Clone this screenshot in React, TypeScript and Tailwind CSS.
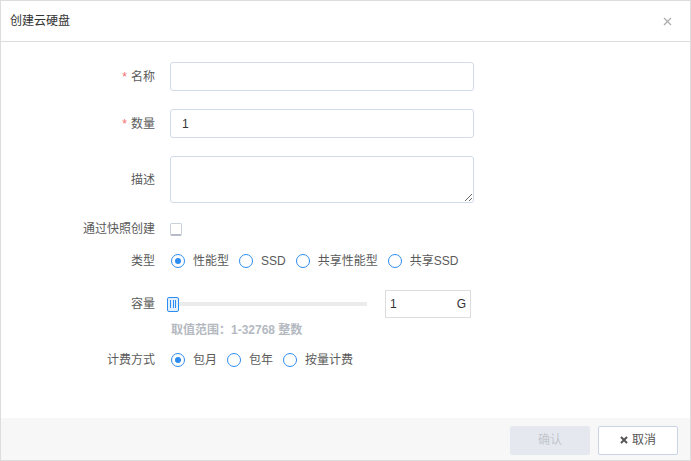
import React from 'react'

const font = { fontFamily: '"Liberation Sans", "Noto Sans CJK SC", sans-serif' }

function Label({ text, required }: { text: string; required?: boolean }) {
  return (
    <div className="w-[154px] shrink-0 text-right text-[12px] text-[#5a5a5a]">
      {required && <span className="mr-[4px] text-[#f56c6c]">*</span>}
      {text}
    </div>
  )
}

function Radio({ label, checked }: { label: string; checked?: boolean }) {
  return (
    <label className="flex items-center mr-[10px] cursor-pointer">
      <span className="flex h-[14px] w-[14px] items-center justify-center rounded-full border border-[#2d8cf0] bg-white">
        {checked && <span className="h-[6px] w-[6px] rounded-full bg-[#2d8cf0]" />}
      </span>
      <span className="ml-[8px] text-[12px] text-[#5a5a5a]">{label}</span>
    </label>
  )
}

export default function App() {
  return (
    <div className="flex h-[461px] w-[691px] flex-col border border-[#ddd] bg-white" style={font}>
      {/* 标题栏 */}
      <div className="flex h-[41px] shrink-0 items-center justify-between border-b border-[#ddd] pl-[9px] pr-[18px]">
        <span className="text-[12px] text-[#333]">创建云硬盘</span>
        <svg width="9" height="9" viewBox="0 0 9 9" className="mt-[1px]">
          <path d="M1 1L8 8M8 1L1 8" stroke="#aaa" strokeWidth="1.2" />
        </svg>
      </div>

      {/* 表单 */}
      <div className="flex-1 pt-[20px]">
        <div className="flex items-center">
          <Label text="名称" required />
          <input className="ml-[15px] h-[29px] w-[304px] rounded-[3px] border border-[#cfdbe9] px-[11px] text-[12px] text-[#333] outline-none" />
        </div>

        <div className="mt-[18px] flex items-center">
          <Label text="数量" required />
          <input
            defaultValue="1"
            className="ml-[15px] h-[29px] w-[304px] rounded-[3px] border border-[#cfdbe9] px-[11px] text-[12px] text-[#333] outline-none"
          />
        </div>

        <div className="mt-[18px] flex items-center">
          <Label text="描述" />
          <textarea className="ml-[15px] h-[47px] w-[304px] rounded-[3px] border border-[#cfdbe9] px-[11px] py-[4px] text-[12px] text-[#333] outline-none" />
        </div>

        <div className="mt-[16px] flex h-[20px] items-center">
          <Label text="通过快照创建" />
          <span className="ml-[15px] h-[13px] w-[12px] rounded-[2px] border border-[#c8d0da] border-b-[2px] border-b-[#b5bcc6] bg-white" />
        </div>

        <div className="mt-[12px] flex h-[20px] items-center">
          <Label text="类型" />
          <div className="ml-[16px] flex items-center">
            <Radio label="性能型" checked />
            <Radio label="SSD" />
            <Radio label="共享性能型" />
            <Radio label="共享SSD" />
          </div>
        </div>

        <div className="mt-[19px] flex h-[28px] items-center">
          <Label text="容量" />
          <div className="ml-[12px] flex w-[200px] items-center">
            <span className="flex h-[15px] w-[12px] shrink-0 items-center justify-center gap-[1.5px] rounded-[2px] border border-[#2d8cf0] bg-[#e1efff]">
              <span className="h-[8px] w-[1px] bg-[#2d8cf0]" />
              <span className="h-[8px] w-[1px] bg-[#2d8cf0]" />
              <span className="h-[8px] w-[1px] bg-[#2d8cf0]" />
            </span>
            <span className="h-[4px] flex-1 bg-[#ebebeb]" />
          </div>
          <div className="ml-[18px] flex h-[28px] w-[86px] items-center justify-between border border-[#ddd] px-[4px] text-[12px] text-[#333]">
            <span>1</span>
            <span>G</span>
          </div>
        </div>

        <div className="mt-[4px] ml-[170px] text-[12px] font-bold leading-[16px] text-[#b4b9c1]">
          取值范围：1-32768 整数
        </div>

        <div className="mt-[12px] flex h-[20px] items-center">
          <Label text="计费方式" />
          <div className="ml-[16px] flex items-center">
            <Radio label="包月" checked />
            <Radio label="包年" />
            <Radio label="按量计费" />
          </div>
        </div>
      </div>

      {/* 底部按钮 */}
      <div className="flex h-[42px] shrink-0 items-center justify-end gap-[8px] bg-[#f7f7f7] pr-[12px] pt-[2px]">
        <button className="h-[29px] w-[80px] rounded-[2px] bg-[#e5e9ef] text-[12px] text-[#c2c6cd]" disabled>
          确认
        </button>
        <button className="flex h-[29px] w-[80px] items-center justify-center gap-[4px] rounded-[2px] border border-[#c9d5e4] bg-white text-[12px] text-[#555]">
          <svg width="8" height="8" viewBox="0 0 8 8">
            <path d="M1 1L7 7M7 1L1 7" stroke="#555" strokeWidth="2" />
          </svg>
          取消
        </button>
      </div>
    </div>
  )
}
